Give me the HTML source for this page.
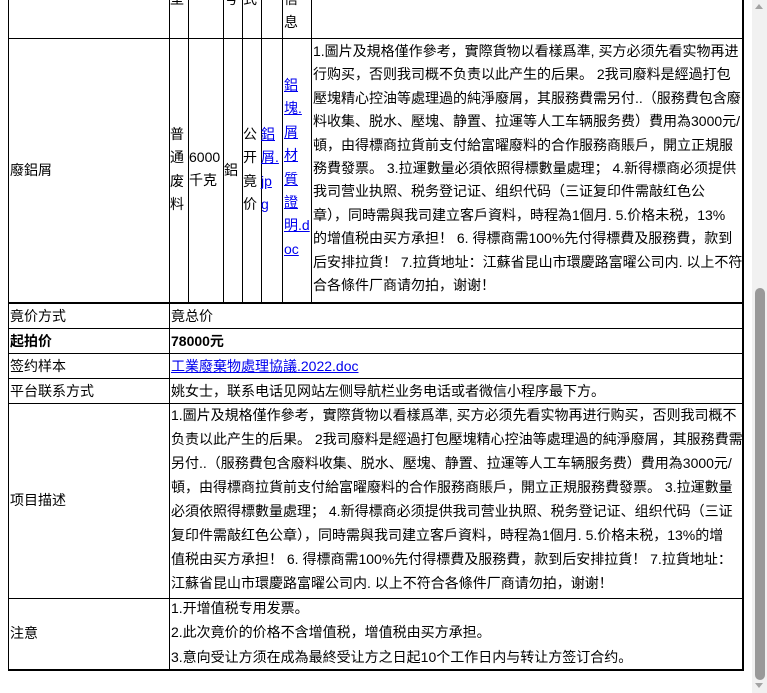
<!DOCTYPE html>
<html><head><meta charset="utf-8"><style>
html,body{margin:0;padding:0;width:767px;height:693px;overflow:hidden;background:#fff;position:relative}
body{font-family:"Liberation Sans","Noto Sans CJK SC",sans-serif;font-size:14px;color:#000}
.h{position:absolute;height:1px;background:#000}
.v{position:absolute;width:1px;background:#000}
.t{position:absolute;white-space:nowrap;line-height:23.4px}
.l{position:absolute;white-space:nowrap;line-height:24.3px}
a{color:#00e;text-decoration:underline}
</style></head><body>
<div class="v" style="left:8px;top:0;height:304px"></div>
<div class="v" style="left:169px;top:0;height:304px"></div>
<div class="v" style="left:188px;top:0;height:304px"></div>
<div class="v" style="left:223px;top:0;height:304px"></div>
<div class="v" style="left:242px;top:0;height:304px"></div>
<div class="v" style="left:261px;top:0;height:304px"></div>
<div class="v" style="left:282px;top:0;height:304px"></div>
<div class="v" style="left:311px;top:0;height:304px"></div>
<div class="v" style="left:742px;top:0;height:671px;width:2px"></div>
<div class="h" style="left:8px;top:38px;width:735px"></div>
<div class="h" style="left:8px;top:302px;width:735px;height:2px"></div>
<div class="t" style="left:170px;top:-12px">型</div>
<div class="t" style="left:224px;top:-12px">号</div>
<div class="t" style="left:243px;top:-12px">式</div>
<div class="t" style="left:284px;top:-12px">信<br>息</div>
<div class="t" style="left:10px;top:159px">廢鋁屑</div>
<div class="t" style="left:170px;top:123px">普<br>通<br>废<br>料</div>
<div class="t" style="left:189px;top:146px">6000<br>千克</div>
<div class="t" style="left:224px;top:159px">鋁</div>
<div class="t" style="left:243px;top:123px">公<br>开<br>竟<br>价</div>
<div class="t" style="left:261px;top:123px"><a>鋁</a><br><a>屑.</a><br><a>jp</a><br><a>g</a></div>
<div class="t" style="left:284px;top:74px"><a>鋁</a><br><a>塊.</a><br><a>屑</a><br><a>材</a><br><a>質</a><br><a>證</a><br><a>明.d</a><br><a>oc</a></div>
<div class="t" style="left:313px;top:40px">1.圖片及規格僅作參考，實際貨物以看樣爲準, 买方必须先看实物再进<br>行购买，否则我司概不负责以此产生的后果。 2我司廢料是經過打包<br>壓塊精心控油等處理過的純淨廢屑，其服務費需另付..（服務費包含廢<br>料收集、脱水、壓塊、静置、拉運等人工车辆服务费）費用為3000元/<br>頓，由得標商拉貨前支付給富曜廢料的合作服務商賬戶，開立正規服<br>務費發票。 3.拉運數量必須依照得標數量處理； 4.新得標商必须提供<br>我司营业执照、税务登记证、组织代码（三证复印件需敲红色公<br>章），同時需與我司建立客戶資料，時程為1個月. 5.价格未税，13%<br>的增值税由买方承担！ 6. 得標商需100%先付得標費及服務費，款到<br>后安排拉貨！ 7.拉貨地址：江蘇省昆山市環慶路富曜公司内. 以上不符<br>合各條件厂商请勿拍，谢谢！</div>
<div class="v" style="left:8px;top:304px;height:367px"></div>
<div class="v" style="left:169px;top:304px;height:367px"></div>
<div class="h" style="left:8px;top:328px;width:735px"></div>
<div class="h" style="left:8px;top:353px;width:735px"></div>
<div class="h" style="left:8px;top:378px;width:735px"></div>
<div class="h" style="left:8px;top:403px;width:735px"></div>
<div class="h" style="left:8px;top:598px;width:735px"></div>
<div class="h" style="left:8px;top:669px;width:736px;height:2px"></div>
<div class="l" style="left:10px;top:304px">竟价方式</div>
<div class="l" style="left:171px;top:304px">竟总价</div>
<div class="l" style="left:10px;top:329px;font-weight:bold">起拍价</div>
<div class="l" style="left:171px;top:329px;font-weight:bold">78000元</div>
<div class="l" style="left:10px;top:354px">签约样本</div>
<div class="l" style="left:171px;top:354px"><a>工業廢棄物處理協議.2022.doc</a></div>
<div class="l" style="left:10px;top:379px">平台联系方式</div>
<div class="l" style="left:171px;top:379px">姚女士，联系电话见网站左侧导航栏业务电话或者微信小程序最下方。</div>
<div class="l" style="left:10px;top:488px">项目描述</div>
<div class="l" style="left:171px;top:403px;line-height:24px">1.圖片及規格僅作參考，實際貨物以看樣爲準, 买方必须先看实物再进行购买，否则我司概不<br>负责以此产生的后果。 2我司廢料是經過打包壓塊精心控油等處理過的純淨廢屑，其服務費需<br>另付..（服務費包含廢料收集、脱水、壓塊、静置、拉運等人工车辆服务费）費用為3000元/<br>頓，由得標商拉貨前支付給富曜廢料的合作服務商賬戶，開立正規服務費發票。 3.拉運數量<br>必須依照得標數量處理； 4.新得標商必须提供我司营业执照、税务登记证、组织代码（三证<br>复印件需敲红色公章），同時需與我司建立客戶資料，時程為1個月. 5.价格未税，13%的增<br>值税由买方承担！ 6. 得標商需100%先付得標費及服務費，款到后安排拉貨！ 7.拉貨地址：<br>江蘇省昆山市環慶路富曜公司内. 以上不符合各條件厂商请勿拍，谢谢！</div>
<div class="l" style="left:10px;top:621px">注意</div>
<div class="l" style="left:171px;top:596px">1.开增值税专用发票。<br>2.此次竟价的价格不含增值税，增值税由买方承担。<br>3.意向受让方须在成為最終受让方之日起10个工作日内与转让方签订合约。</div>
<div style="position:absolute;left:752px;top:0;width:15px;height:693px;background:#f1f1f1"></div>
<div style="position:absolute;left:755px;top:4px;width:0;height:0;border-left:4px solid transparent;border-right:4px solid transparent;border-bottom:5px solid #a3a3a3"></div>
<div style="position:absolute;left:755px;top:288px;width:10px;height:392px;background:#999;border-radius:5px"></div>
<div style="position:absolute;left:755px;top:683px;width:0;height:0;border-left:4px solid transparent;border-right:4px solid transparent;border-top:5px solid #a3a3a3"></div>
</body></html>
